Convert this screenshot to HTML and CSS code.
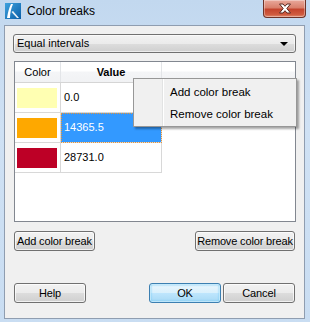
FILE: index.html
```html
<!DOCTYPE html>
<html>
<head>
<meta charset="utf-8">
<link rel="stylesheet" href="styles.css">
</head>
<body>
<div class="window">
  <div class="titlebar">
    <svg class="app-icon" width="16" height="16" viewBox="0 0 16 16">
      <defs>
        <linearGradient id="ig" x1="0" y1="0" x2="1" y2="1">
          <stop offset="0" stop-color="#3fa2de"/>
          <stop offset="1" stop-color="#0a5fa8"/>
        </linearGradient>
      </defs>
      <rect x="0" y="0" width="16" height="16" fill="url(#ig)"/>
      <path d="M6 1 C4 5 3 9 2 15 L5 15 C5 10 6 6 8 1 Z" fill="#fff"/>
      <path d="M6.5 9 L12 15 L14 15 L8 8 Z" fill="#fff" opacity="0.9"/>
    </svg>
    <span class="title">Color breaks</span>
    <div class="close-btn">
      <svg width="14" height="11" viewBox="0 0 14 11">
        <path d="M1.5 1 L5 1 L7 3.3 L9 1 L12.5 1 L8.8 5.5 L12.5 10 L9 10 L7 7.7 L5 10 L1.5 10 L5.2 5.5 Z" fill="#fff" stroke="#5a2a22" stroke-width="1" stroke-linejoin="round"/>
      </svg>
    </div>
  </div>
  <div class="client">
    <div class="combo">
      <span class="combo-text">Equal intervals</span>
      <span class="combo-arrow"></span>
    </div>
    <div class="table-widget">
      <div class="header">
        <div class="hcell col-color">Color</div>
        <div class="hcell col-value bold">Value</div>
        <div class="hfill"></div>
      </div>
      <div class="row">
        <div class="cell col-color"><span class="swatch sw-yellow"></span></div>
        <div class="cell col-value">0.0</div>
      </div>
      <div class="row">
        <div class="cell col-color"><span class="swatch sw-orange"></span></div>
        <div class="cell col-value selected">14365.5</div>
      </div>
      <div class="row">
        <div class="cell col-color"><span class="swatch sw-red"></span></div>
        <div class="cell col-value">28731.0</div>
      </div>
      <div class="menu">
        <div class="menu-item">Add color break</div>
        <div class="menu-item">Remove color break</div>
      </div>
    </div>
    <div class="btn-row row1">
      <button class="btn btn-add">Add color break</button>
      <button class="btn btn-remove">Remove color break</button>
    </div>
    <div class="btn-row row2">
      <button class="btn btn-help">Help</button>
      <div class="right-group">
        <button class="btn btn-ok default">OK</button>
        <button class="btn btn-cancel">Cancel</button>
      </div>
    </div>
  </div>
</div>
</body>
</html>
```

FILE: styles.css
```css
* { box-sizing: border-box; }
html, body { margin: 0; padding: 0; }
body {
  width: 310px;
  height: 322px;
  overflow: hidden;
  font-family: "Liberation Sans", Arial, sans-serif;
  font-size: 11px;
  color: #000;
}
.window {
  width: 310px;
  height: 322px;
  background: linear-gradient(180deg, #c2d8ef 0%, #cfe1f4 40%, #c9ddf2 100%);
  display: flex;
  flex-direction: column;
}
.titlebar {
  height: 25px;
  display: flex;
  align-items: flex-start;
  position: relative;
}
.app-icon {
  margin: 3px 0 0 5px;
  flex: none;
}
.title {
  margin: 3px 0 0 6px;
  font-size: 12px;
  line-height: 17px;
  color: #000;
}
.close-btn {
  position: absolute;
  left: 263px;
  top: 0;
  width: 43px;
  height: 18px;
  border: 1px solid #6e3328;
  border-top: none;
  border-radius: 0 0 4px 4px;
  background: linear-gradient(180deg, #e9a99b 0%, #d9806c 45%, #c4442d 55%, #cf5a3e 85%, #e08a6f 100%);
  box-shadow: inset 0 0 0 1px rgba(255,255,255,0.35);
  display: flex;
  align-items: center;
  justify-content: center;
}
.client {
  margin: 0 5px 0 4px;
  height: 294px;
  border: 1px solid #8f9db0;
  background: #f0f0f0;
  padding: 0 8px 0 8px;
  display: flex;
  flex-direction: column;
}
.combo {
  margin-top: 8px;
  height: 19px;
  border: 1px solid #707070;
  border-radius: 3px;
  background: linear-gradient(180deg, #f2f2f2 0%, #ebebeb 50%, #dddddd 50%, #cfcfcf 100%);
  box-shadow: inset 0 0 0 1px rgba(255,255,255,0.6);
  display: flex;
  align-items: center;
  padding: 0 0 0 3px;
  position: relative;
}
.combo-text { line-height: 17px; }
.combo-arrow {
  position: absolute;
  right: 7px;
  top: 7px;
  width: 0;
  height: 0;
  border-left: 4px solid transparent;
  border-right: 4px solid transparent;
  border-top: 4px solid #000;
}
.table-widget {
  margin: 8px 0 0 1px;
  height: 161px;
  border: 1px solid #828790;
  background: #fff;
  position: relative;
}
.header {
  display: flex;
  height: 21px;
  border-bottom: 1px solid #d5d5d5;
  background: linear-gradient(180deg, #ffffff 0%, #ffffff 45%, #f4f5f7 50%, #f1f2f4 100%);
}
.hcell {
  text-align: center;
  line-height: 20px;
  border-right: 1px solid #e3e5e8;
}
.hfill { flex: 1; }
.bold { font-weight: bold; }
.col-color { width: 46px; flex: none; }
.col-value { width: 101px; flex: none; }
.row {
  display: flex;
  height: 30px;
}
.cell {
  border-right: 1px solid #d8d8d8;
  border-bottom: 1px solid #d8d8d8;
  height: 30px;
}
.cell.col-value {
  padding-left: 3px;
  line-height: 29px;
}
.cell.col-color {
  padding: 5px 0 0 2px;
}
.swatch {
  display: block;
  width: 40px;
  height: 20px;
}
.sw-yellow { background: #ffffb2; }
.sw-orange { background: #fea800; }
.sw-red { background: #bd0026; }
.cell.selected {
  background: #3399ff;
  color: #fff;
  outline: 1px dotted #e7963b;
  outline-offset: -1px;
}
.menu {
  position: absolute;
  left: 118px;
  top: 16px;
  width: 164px;
  height: 49px;
  border: 1px solid #979797;
  background: #f0f0f0;
  padding: 2px 2px;
  box-shadow: 2px 2px 2px rgba(0,0,0,0.35);
  background-image: linear-gradient(90deg, transparent 28px, #e2e3e3 28px, #e2e3e3 29px, #ffffff 29px, #ffffff 30px, transparent 30px);
}
.menu-item {
  height: 22px;
  line-height: 22px;
  padding-left: 34px;
  font-size: 11.5px;
  white-space: nowrap;
}
.btn-row {
  display: flex;
  justify-content: space-between;
  height: 20px;
  padding: 0 1px 0 1px;
}
.row1 { margin-top: 9px; }
.row2 { margin-top: 32px; }
.btn {
  font-family: "Liberation Sans", Arial, sans-serif;
  font-size: 11px;
  letter-spacing: -0.15px;
  white-space: nowrap;
  color: #000;
  height: 20px;
  padding: 0;
  border: 1px solid #707070;
  border-radius: 3px;
  background: linear-gradient(180deg, #f2f2f2 0%, #ebebeb 50%, #dddddd 50%, #cfcfcf 100%);
  box-shadow: inset 0 0 0 1px rgba(255,255,255,0.7);
  margin: 0;
}
.btn-add { width: 81px; }
.btn-remove { width: 100px; }
.btn-help, .btn-ok, .btn-cancel { width: 72px; }
.right-group { display: flex; gap: 2px; }
.btn.default {
  border-color: #3c7fb1;
  background: linear-gradient(180deg, #eaf6fd 0%, #d9f0fc 50%, #bee6fd 50%, #a7d9f5 100%);
  box-shadow: inset 0 0 0 1px rgba(255,255,255,0.5), inset 0 0 2px 1px #6bc7f3;
}
```
